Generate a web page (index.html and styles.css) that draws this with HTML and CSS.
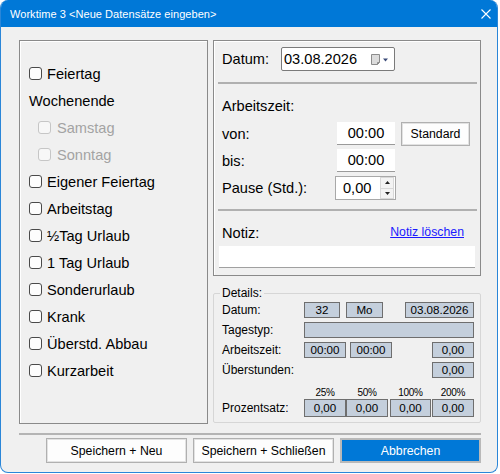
FILE: index.html
```html
<!DOCTYPE html>
<html>
<head>
<meta charset="utf-8">
<link rel="stylesheet" href="styles.css">
</head>
<body>
<div class="window">
  <div class="titlebar">
    <span class="title">Worktime 3 &lt;Neue Datensätze eingeben&gt;</span>
    <svg class="close" width="10" height="10" viewBox="0 0 10 10"><path d="M0.5 0.5L9.5 9.5M9.5 0.5L0.5 9.5" stroke="#fff" stroke-width="1.1" fill="none"/></svg>
  </div>
  <div class="main">
    <div class="leftbox">
      <div class="cb"><span class="box"></span>Feiertag</div>
      <div class="grp">Wochenende</div>
      <div class="cb sub disabled"><span class="box"></span>Samstag</div>
      <div class="cb sub disabled"><span class="box"></span>Sonntag</div>
      <div class="cb"><span class="box"></span>Eigener Feiertag</div>
      <div class="cb"><span class="box"></span>Arbeitstag</div>
      <div class="cb"><span class="box"></span>½Tag Urlaub</div>
      <div class="cb"><span class="box"></span>1 Tag Urlaub</div>
      <div class="cb"><span class="box"></span>Sonderurlaub</div>
      <div class="cb"><span class="box"></span>Krank</div>
      <div class="cb"><span class="box"></span>Überstd. Abbau</div>
      <div class="cb"><span class="box"></span>Kurzarbeit</div>
    </div>
    <div class="rightcol">
      <div class="topbox">
        <div class="daterow">
          <span class="lbl lbl-date">Datum:</span>
          <div class="datepick">
            <span class="dateval">03.08.2026</span>
            <svg class="calicon" width="18" height="12" viewBox="0 0 18 12">
              <path d="M0.5 0.5H8.5V8.5L6.5 10.5H0.5Z" fill="#dcdcdc" stroke="#8c8c8c"/>
              <path d="M6.5 10.5V8.5H8.5" fill="none" stroke="#8c8c8c"/>
              <path d="M12 4.5H17L14.5 7.5Z" fill="#3a4a78"/>
            </svg>
          </div>
        </div>
        <div class="sep"></div>
        <div class="heading">Arbeitszeit:</div>
        <div class="trow">
          <span class="lbl lbl-time">von:</span>
          <div class="time">00:00</div>
          <div class="btn std">Standard</div>
        </div>
        <div class="trow">
          <span class="lbl lbl-time">bis:</span>
          <div class="time">00:00</div>
        </div>
        <div class="trow">
          <span class="lbl lbl-time">Pause (Std.):</span>
          <div class="spinner">
            <span class="spinval">0,00</span>
            <div class="spinbtns">
              <div class="spinbtn"><svg width="5" height="3" viewBox="0 0 5 3"><path d="M0 3H5L2.5 0Z" fill="#222"/></svg></div>
              <div class="spinbtn"><svg width="5" height="3" viewBox="0 0 5 3"><path d="M0 0H5L2.5 3Z" fill="#222"/></svg></div>
            </div>
          </div>
        </div>
        <div class="sep sep2"></div>
        <div class="notizrow">
          <span class="lbl">Notiz:</span>
          <a class="link">Notiz löschen</a>
        </div>
        <div class="notiz"></div>
      </div>
      <fieldset class="details">
        <legend>Details:</legend>
        <div class="drow first">
          <span class="dl">Datum:</span>
          <span class="val w36">32</span>
          <span class="val w37 ml6">Mo</span>
          <span class="val w69 ml22">03.08.2026</span>
        </div>
        <div class="drow">
          <span class="dl">Tagestyp:</span>
          <span class="val w170"></span>
        </div>
        <div class="drow">
          <span class="dl">Arbeitszeit:</span>
          <span class="val w42">00:00</span>
          <span class="val w42 ml4">00:00</span>
          <span class="val w42 ml40">0,00</span>
        </div>
        <div class="drow">
          <span class="dl">Überstunden:</span>
          <span class="val w42 ml128">0,00</span>
        </div>
        <div class="pctrow">
          <span class="dl"></span>
          <span class="pct w42">25%</span>
          <span class="pct w42">50%</span>
          <span class="pct w41 ml2">100%</span>
          <span class="pct w42 ml1">200%</span>
        </div>
        <div class="drow prow">
          <span class="dl">Prozentsatz:</span>
          <span class="val w42">0,00</span>
          <span class="val w42">0,00</span>
          <span class="val w41 ml2">0,00</span>
          <span class="val w42 ml1">0,00</span>
        </div>
      </fieldset>
    </div>
  </div>
  <div class="hsep"></div>
  <div class="buttons">
    <div class="btn big">Speichern + Neu</div>
    <div class="btn big">Speichern + Schließen</div>
    <div class="btn big primary">Abbrechen</div>
  </div>
</div>
</body>
</html>
```
FILE: styles.css
```css
html, body {
  margin: 0;
  padding: 0;
  background: #ffffff;
}
body {
  font-family: "Liberation Sans", Arial, sans-serif;
  color: #000;
}
.window {
  width: 498px;
  height: 473px;
  box-sizing: border-box;
  border: 1px solid #2a86d8;
  border-top: 0;
  border-radius: 8px;
  overflow: hidden;
  background: #f0f0f0;
}
.titlebar {
  height: 27px;
  background: #0078d7;
  color: #fff;
  display: flex;
  align-items: center;
  justify-content: space-between;
  padding: 0 6px 0 9px;
  font-size: 11px;
  letter-spacing: 0.05px;
}
.title { padding-top: 1px; }
.close { margin-top: 0; }

.main {
  display: flex;
  gap: 5px;
  padding: 13px 0 0 18px;
}
.leftbox {
  width: 189px;
  height: 384px;
  box-sizing: border-box;
  border: 1px solid #8a8a8a;
  box-shadow: inset 1px 1px 0 #ffffff;
  padding: 19px 0 0 9px;
  font-size: 14.6px;
}
.cb, .grp {
  height: 27px;
  display: flex;
  align-items: center;
}
.cb { gap: 5px; }
.cb .box {
  width: 13px;
  height: 13px;
  box-sizing: border-box;
  border: 1px solid #4a4a4a;
  border-radius: 3px;
  background: #fdfdfd;
  flex: none;
}
.cb.sub { padding-left: 9px; gap: 6px; }
.cb.disabled { color: #a3a3a3; }
.cb.disabled .box { border-color: #c6c6c6; background: #f7f7f7; }

.rightcol {
  width: 268px;
  display: flex;
  flex-direction: column;
}
.topbox {
  height: 236px;
  box-sizing: border-box;
  border: 1px solid #8a8a8a;
  box-shadow: inset 1px 1px 0 #ffffff;
  font-size: 14.6px;
  padding-top: 6px;
}
.lbl { display: inline-block; }
.daterow {
  display: flex;
  align-items: center;
  height: 24px;
  padding-left: 8px;
}
.lbl-date { width: 59px; }
.datepick {
  width: 114px;
  height: 24px;
  box-sizing: border-box;
  border: 1px solid #7a7a7a;
  border-radius: 2px;
  background: #fff;
  display: flex;
  align-items: center;
  justify-content: space-between;
  padding: 0 5px 0 2px;
}
.calicon { margin-top: 1px; }
.sep {
  height: 2px;
  background: #b0b0b0;
  margin: 11px 3px 0 4px;
}
.heading {
  height: 18px;
  line-height: 18px;
  margin-top: 13px;
  padding-left: 8px;
}
.trow {
  display: flex;
  align-items: center;
  height: 24px;
  margin-top: 3px;
  padding-left: 8px;
}
.trow:first-of-type { margin-top: 7px; }
.heading + .trow { margin-top: 7px; }
.lbl-time { width: 115px; }
.time {
  width: 58px;
  height: 23px;
  box-sizing: border-box;
  background: #fff;
  border-bottom: 1px solid #9a9a9a;
  text-align: center;
  line-height: 22px;
  align-self: flex-start;
}
.btn {
  box-sizing: border-box;
  border: 1px solid #b0b0b0;
  box-shadow: inset 0 0 0 1px #e2e2e2;
  background: #fdfdfd;
  display: flex;
  align-items: center;
  justify-content: center;
  font-size: 12.3px;
}
.std {
  width: 69px;
  height: 24px;
  margin-left: 6px;
}
.spinner {
  width: 61px;
  height: 24px;
  margin-left: -2px;
  box-sizing: border-box;
  border: 1px solid #a8a8a8;
  background: #fff;
  display: flex;
  align-items: center;
  justify-content: space-between;
  padding: 0 1px 0 7px;
}
.spinbtns {
  width: 12px;
  height: 20px;
  display: flex;
  flex-direction: column;
  border: 1px solid #d8d8d8;
  background: #f3f3f3;
}
.spinbtn {
  flex: 1;
  display: flex;
  align-items: center;
  justify-content: center;
}
.spinbtn + .spinbtn { border-top: 1px solid #d8d8d8; }
.sep2 { margin-top: 9px; }
.notizrow {
  display: flex;
  align-items: center;
  justify-content: space-between;
  height: 18px;
  margin-top: 13px;
  padding: 0 16px 0 8px;
}
.link {
  color: #1a1aff;
  text-decoration: underline;
  font-size: 12.3px;
  margin-top: -3px;
}
.notiz {
  height: 22px;
  box-sizing: border-box;
  margin: 4px 5px 0 5px;
  background: #fff;
  border-bottom: 1px solid #a0a0a0;
}

.details {
  margin: 10px 0 0 0;
  padding: 0 0 5px 0;
  border: 1px solid #d6d6d6;
  border-radius: 2px;
  font-size: 12px;
  min-width: 0;
}
.details legend {
  margin-left: 6px;
  padding: 0 2px;
  line-height: 14px;
}
.drow {
  display: flex;
  align-items: center;
  height: 16px;
  margin-bottom: 4px;
}
.drow.first { margin-top: 2px; }
.dl {
  width: 90px;
  padding-left: 8px;
  box-sizing: border-box;
  flex: none;
}
.val {
  height: 16px;
  box-sizing: border-box;
  border: 1px solid #6e6e6e;
  background: #c4cfdc;
  text-align: center;
  line-height: 14px;
  font-size: 11.6px;
  flex: none;
}
.prow { height: 18px; margin-bottom: 0; }
.prow .val { height: 18px; line-height: 16px; }
.pctrow {
  display: flex;
  align-items: flex-end;
  height: 17px;
}
.pct {
  text-align: center;
  font-size: 10px;
  line-height: 12px;
  letter-spacing: -0.3px;
}
.w36 { width: 36px; }
.w37 { width: 37px; }
.w41 { width: 41px; }
.w42 { width: 42px; }
.w69 { width: 69px; }
.w170 { width: 170px; }
.ml1 { margin-left: 1px; }
.ml2 { margin-left: 2px; }
.ml4 { margin-left: 4px; }
.ml6 { margin-left: 6px; }
.ml22 { margin-left: 22px; }
.ml40 { margin-left: 40px; }
.ml128 { margin-left: 128px; }

.hsep {
  height: 2px;
  background: #b4b4b4;
  margin: 9px 16px 0 18px;
}
.buttons {
  display: flex;
  gap: 6px;
  padding: 3px 0 0 45px;
}
.big {
  width: 141px;
  height: 25px;
}
.primary {
  background: #0078d7;
  border: 2px solid #b9b9b9;
  box-shadow: none;
  color: #fff;
}
```
